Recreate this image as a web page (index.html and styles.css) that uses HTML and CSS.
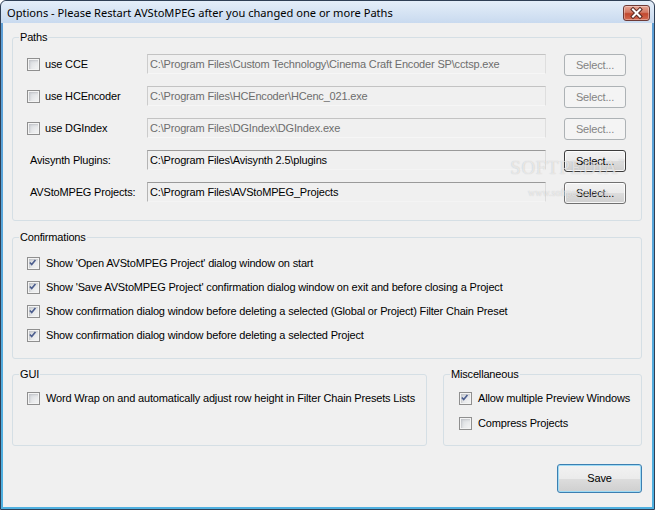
FILE: index.html
```html
<!DOCTYPE html>
<html>
<head>
<meta charset="utf-8">
<title>Options</title>
<link rel="stylesheet" href="styles.css">
</head>
<body>
<div class="window">
  <div class="titlebar">
    <span class="title">Options - Please Restart AVStoMPEG after you changed one or more Paths</span>
    <div class="close">
      <svg width="27" height="16" viewBox="0 0 27 16">
        <path d="M10 4.5 L17 11.5 M17 4.5 L10 11.5" stroke="#5a2a24" stroke-width="4" stroke-linecap="square" fill="none"/>
        <path d="M10 4.5 L17 11.5 M17 4.5 L10 11.5" stroke="#ffffff" stroke-width="2" stroke-linecap="square" fill="none"/>
      </svg>
    </div>
  </div>
  <div class="client">
    <fieldset class="group">
      <legend>Paths</legend>
      <div class="paths">
        <div class="prow">
          <div class="chk"><span class="cb"></span>use CCE</div>
          <div class="field off">C:\Program Files\Custom Technology\Cinema Craft Encoder SP\cctsp.exe</div>
          <div class="btn off">Select...</div>
        </div>
        <div class="prow">
          <div class="chk"><span class="cb"></span>use HCEncoder</div>
          <div class="field off">C:\Program Files\HCEncoder\HCenc_021.exe</div>
          <div class="btn off">Select...</div>
        </div>
        <div class="prow">
          <div class="chk"><span class="cb"></span>use DGIndex</div>
          <div class="field off">C:\Program Files\DGIndex\DGIndex.exe</div>
          <div class="btn off">Select...</div>
        </div>
        <div class="prow">
          <div class="lbl">Avisynth Plugins:</div>
          <div class="field">C:\Program Files\Avisynth 2.5\plugins</div>
          <div class="btn focus">Select...</div>
        </div>
        <div class="prow">
          <div class="lbl">AVStoMPEG Projects:</div>
          <div class="field">C:\Program Files\AVStoMPEG_Projects</div>
          <div class="btn">Select...</div>
        </div>
      </div>
    </fieldset>

    <fieldset class="group confirm">
      <legend>Confirmations</legend>
      <div class="checks">
        <div class="chk"><span class="cb on"><svg viewBox="0 0 13 13"><path d="M3.2 6.3 L5.4 8.8 L9.8 3.4" /></svg></span>Show 'Open AVStoMPEG Project' dialog window on start</div>
        <div class="chk"><span class="cb on"><svg viewBox="0 0 13 13"><path d="M3.2 6.3 L5.4 8.8 L9.8 3.4" /></svg></span>Show 'Save AVStoMPEG Project' confirmation dialog window on exit and before closing a Project</div>
        <div class="chk"><span class="cb on"><svg viewBox="0 0 13 13"><path d="M3.2 6.3 L5.4 8.8 L9.8 3.4" /></svg></span>Show confirmation dialog window before deleting a selected (Global or Project) Filter Chain Preset</div>
        <div class="chk"><span class="cb on"><svg viewBox="0 0 13 13"><path d="M3.2 6.3 L5.4 8.8 L9.8 3.4" /></svg></span>Show confirmation dialog window before deleting a selected Project</div>
      </div>
    </fieldset>

    <div class="lower">
      <fieldset class="group gui">
        <legend>GUI</legend>
        <div class="checks gui-checks">
          <div class="chk"><span class="cb"></span>Word Wrap on and automatically adjust row height in Filter Chain Presets Lists</div>
        </div>
      </fieldset>
      <fieldset class="group misc">
        <legend>Miscellaneous</legend>
        <div class="checks misc-checks">
          <div class="chk"><span class="cb on"><svg viewBox="0 0 13 13"><path d="M3.2 6.3 L5.4 8.8 L9.8 3.4" /></svg></span>Allow multiple Preview Windows</div>
          <div class="chk"><span class="cb"></span>Compress Projects</div>
        </div>
      </fieldset>
    </div>

    <div class="actions">
      <div class="btn save">Save</div>
    </div>
  </div>
  <div class="watermark">
    <span class="wm-big">SOFTPEDIA<sup>™</sup></span>
    <span class="wm-small">www.softpedia.com</span>
  </div>
</div>
</body>
</html>
```

FILE: styles.css
```css
* { box-sizing: border-box; }
html, body { margin: 0; padding: 0; }
body {
  width: 655px;
  height: 510px;
  overflow: hidden;
  background: #ffffff;
  font-family: "Liberation Sans", Arial, sans-serif;
  font-size: 11px;
  letter-spacing: -0.17px;
  color: #000;
}
.window {
  position: relative;
  width: 655px;
  height: 510px;
  display: flex;
  flex-direction: column;
  background: linear-gradient(#e4eef9, #c9daef 22px, #5f9fd6 22px, #4fb0e0);
  border: 1px solid #2f3f55;
  border-radius: 6px 6px 0 0;
  padding: 0 2px 2px 2px;
}
.titlebar {
  height: 22px;
  display: flex;
  align-items: center;
  padding-left: 5px;
  margin: 0 -1px;
  background: linear-gradient(#e4eef9, #c9daef);
  border-radius: 5px 5px 0 0;
}
.title {
  font-family: "Noto Sans", "Open Sans", sans-serif;
  font-size: 11.1px;
  letter-spacing: 0;
  color: #000;
  margin-top: 1px;
}
.close {
  margin-left: auto;
  margin-right: 3px;
  align-self: flex-start;
  margin-top: 4px;
  width: 27px;
  height: 16px;
  border: 1px solid #6e3a36;
  border-radius: 3px;
  background: linear-gradient(#e8a493, #d27a65 45%, #c2482f 55%, #d26a52);
  box-shadow: inset 0 0 0 1px rgba(255,255,255,0.35);
  display: flex;
}
.close svg { display: block; margin: -1px; }
.client {
  flex: 1;
  background: #f0f0f0;
  padding: 8px 10px 0 9px;
  display: flex;
  flex-direction: column;
}
.group {
  margin: 0;
  padding: 0;
  border: 1px solid #d5dfe5;
  border-radius: 3px;
  min-width: 0;
}
.group legend {
  padding: 0 1px;
  margin-left: 6px;
  line-height: 13px;
  font-size: 11px;
}
.paths {
  padding: 8px 0 20px 14px;
  display: grid;
  row-gap: 12px;
}
.prow {
  display: grid;
  grid-template-columns: 102px 399px 62px;
  column-gap: 18px;
  height: 20px;
  align-items: center;
}
.lbl { padding-left: 3px; white-space: nowrap; }
.field {
  height: 20px;
  border: 1px solid;
  border-color: #9a9a9a #dcdcdc #f4f4f4 #b4b4b4;
  background: #f0f0f0;
  padding: 2px 0 0 2px;
  line-height: 14px;
  white-space: nowrap;
  overflow: hidden;
}
.field.off {
  color: #6d6d6d;
  border-color: #c3c3c3 #dedede #f6f6f6 #cccccc;
}
.btn {
  height: 22px;
  align-self: start;
  margin-top: 2px;
  border: 1px solid #707070;
  border-radius: 3px;
  background: linear-gradient(#f2f2f2, #ebebeb 50%, #dddddd 50%, #cfcfcf);
  box-shadow: inset 0 0 0 1px rgba(255,255,255,0.8);
  display: flex;
  align-items: center;
  justify-content: center;
  padding-bottom: 1px;
}
.btn.off {
  border-color: #adb2b5;
  background: #f4f4f4;
  color: #838383;
  box-shadow: none;
}
.btn.focus { border-color: #3c3c3c; }
.chk {
  display: flex;
  align-items: center;
  gap: 6px;
  height: 16px;
  white-space: nowrap;
}
.prow .chk { height: 20px; gap: 5px; }
.cb {
  width: 13px;
  height: 13px;
  flex: none;
  border: 1px solid #8f8f8f;
  background: linear-gradient(135deg, #d3d6da, #f8f8f8);
  box-shadow: inset 0 0 0 1px #f4f4f4, inset 1px 1px 2px 1px rgba(160,165,170,0.45);
  display: flex;
}
.cb svg { width: 11px; height: 11px; display: block; margin: 0; }
.cb svg path {
  fill: none;
  stroke: #4b5d8e;
  stroke-width: 1.9;
  transform: translate(-1px, -1px);
}
.confirm { margin-top: 10px; }
.checks {
  display: grid;
  row-gap: 8px;
  padding: 11px 0 15px 14px;
}
.lower {
  display: flex;
  gap: 16px;
  margin-top: 9px;
}
.lower .group { height: 78px; }
.gui { width: 415px; flex: none; }
.misc { flex: 1; }
.gui-checks { padding: 9px 0 0 14px; }
.misc-checks { padding: 9px 0 0 15px; row-gap: 9px; }
.actions {
  display: flex;
  justify-content: flex-end;
  margin-top: 18px;
}
.btn.save {
  width: 85px;
  height: 29px;
  margin-top: 0;
  border-color: #3c7fb1;
  box-shadow: inset 0 0 0 1px #9fdbf5;
}
.watermark {
  position: absolute;
  left: 503px;
  top: 156px;
  width: 128px;
  display: flex;
  flex-direction: column;
  align-items: center;
  pointer-events: none;
  letter-spacing: 0;
}
.wm-big {
  font-family: "Liberation Serif", serif;
  font-size: 19px;
  line-height: 22px;
  color: rgba(255,255,255,0.6);
  text-shadow: 0 0 1px rgba(110,110,110,0.4);
  letter-spacing: 0.6px;
}
.wm-big sup { font-size: 7px; vertical-align: top; line-height: 10px; }
.wm-small {
  font-family: "Liberation Serif", serif;
  font-size: 10px;
  line-height: 12px;
  color: rgba(255,255,255,0.6);
  text-shadow: 0 0 1px rgba(110,110,110,0.4);
  margin-top: 8px;
}
```
